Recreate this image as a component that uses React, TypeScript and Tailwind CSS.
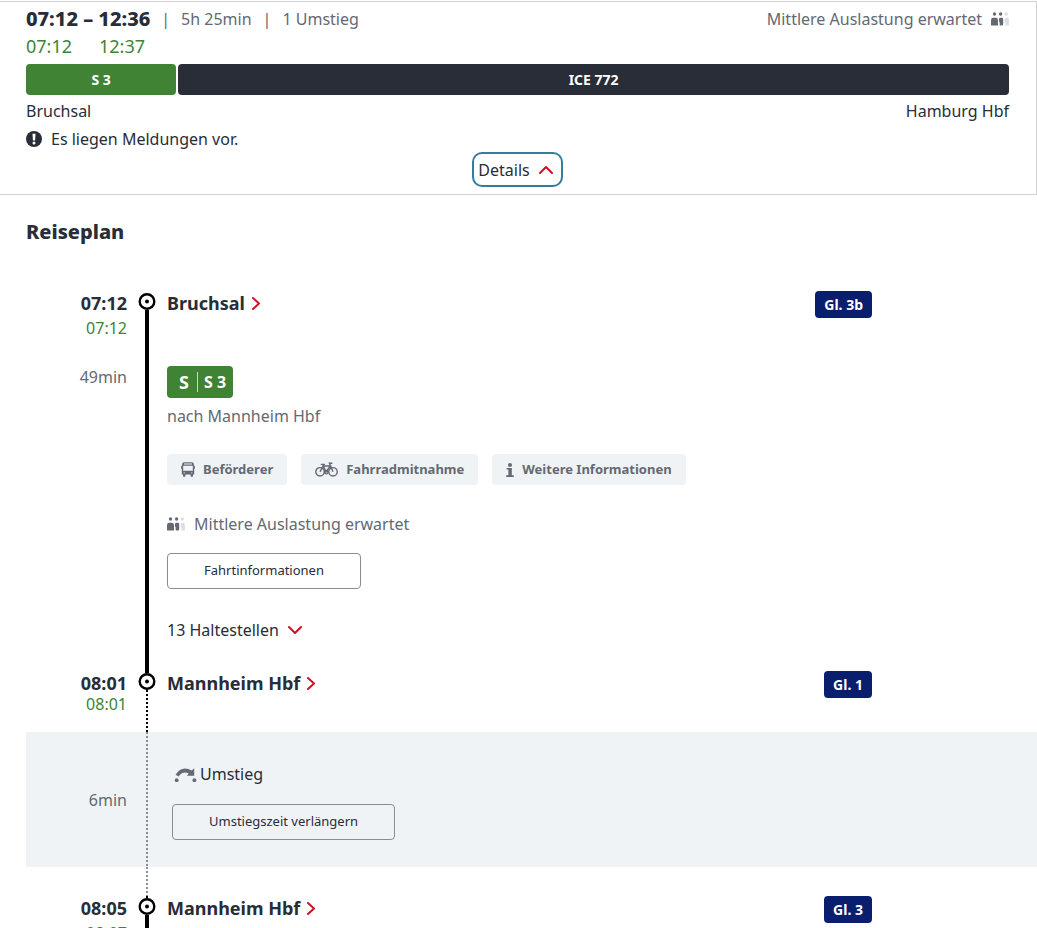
import clsx from 'clsx';
import type { ReactNode } from 'react';

type Segment = { name: string; minutes: number; className: string };

const SEGMENTS: ReadonlyArray<Segment> = [
    { name: 'S 3', minutes: 49, className: 'bg-[#408335]' },
    { name: 'ICE 772', minutes: 271, className: 'bg-[#282d37]' },
];

function OccupancyIcon() {
    return (
        <svg viewBox="0 0 18 14" className="h-[14px] w-[18px] shrink-0" aria-hidden>
            <g fill="#646973">
                <circle cx="3.5" cy="2" r="1.7" />
                <circle cx="9.6" cy="2" r="1.7" />
                <path d="M0 8.2Q0 5.8 2.2 5.8H4.8Q7 5.8 7 8.2V13.5H0Z" />
                <path d="M8 7.2Q8 5.8 9.4 5.8H10.6Q12.2 5.8 12.2 7.2V12Q12.2 13.5 10.8 13.5H9.4Q8.6 13.5 8.6 12.4V10.2Q8 9.8 8 9Z" />
            </g>
            <g fill="#dcdee2">
                <circle cx="15.3" cy="2" r="1.7" />
                <path d="M13.8 7.4Q13.8 5.8 15.2 5.8H16.4Q17.9 5.8 17.9 7.4V13.5H14.4V10.2Q13.8 9.8 13.8 9Z" />
            </g>
        </svg>
    );
}

function BusIcon() {
    return (
        <svg viewBox="0 0 14 15" className="h-[15px] w-[14px] shrink-0" aria-hidden>
            <path
                fill="#646973"
                fillRule="evenodd"
                d="M3 .3H11Q12.8.3 12.9 2.2L13 3.8H13.8V7H13.2V12.5H12V14Q12 14.7 11.2 14.7H10.4Q9.6 14.7 9.6 14V12.5H4.4V14Q4.4 14.7 3.6 14.7H2.8Q2 14.7 2 14V12.5H.8V7H.2V3.8H1L1.1 2.2Q1.2.3 3 .3ZM3 1.6V2.4H11V1.6ZM2.2 3.8V8.8H11.8V3.8ZM2.6 10.5V11.3H4V10.5ZM10 10.5V11.3H11.4V10.5Z"
            />
        </svg>
    );
}

function BikeIcon() {
    return (
        <svg viewBox="0 0 23 15" className="h-[15px] w-[23px] shrink-0" fill="none" stroke="#646973" strokeWidth="1.4" aria-hidden>
            <circle cx="5" cy="9.8" r="4.2" />
            <circle cx="18" cy="9.8" r="4.2" />
            <path d="M5 9.8L8.2 4H15.4L11 10L7.8 2.6M18 9.8L14.4 1.2H17.4M5.8 2.4H10" />
            <circle cx="11.3" cy="10.2" r="1.7" />
        </svg>
    );
}

function InfoIcon() {
    return (
        <svg viewBox="0 0 8 14" className="h-[14px] w-2 shrink-0" fill="#646973" aria-hidden>
            <circle cx="4" cy="2" r="2" />
            <path d="M.6 5H5.8V12.2H7.8V13.9H.2V12.2H2.4V6.6H.6Z" />
        </svg>
    );
}

function TransferIcon() {
    return (
        <svg viewBox="0 0 24 15" className="h-[15px] w-6 shrink-0" aria-hidden>
            <g fill="#646973">
                <circle cx="2.7" cy="13.2" r="1.9" />
                <circle cx="20.4" cy="13.2" r="1.9" />
                <path d="M20.2 1.2V8.8H12.8L14.8 6.6Q8.6 3.6 4.6 9.6L1.6 7.8Q7.6 -2 17.8 3.4Z" />
            </g>
        </svg>
    );
}

function AlertIcon() {
    return (
        <svg viewBox="0 0 16 16" className="size-4 shrink-0" aria-hidden>
            <circle cx="8" cy="8" r="8" fill="#282d37" />
            <path d="M6.5 2.8H9.5L9.1 9.4H6.9Z" fill="#fff" />
            <circle cx="8" cy="12" r="1.5" fill="#fff" />
        </svg>
    );
}

function Chevron({ direction }: { direction: 'up' | 'down' | 'right' }) {
    return (
        <svg
            viewBox="0 0 14 14"
            className="size-[14px] shrink-0"
            fill="none"
            stroke="#d01027"
            strokeWidth="2"
            strokeLinecap="round"
            strokeLinejoin="round"
            aria-hidden
        >
            <path d={{ up: 'M1 10L7 4L13 10', down: 'M1 4L7 10L13 4', right: 'M5 1L11 6.5L5 12' }[direction]} />
        </svg>
    );
}

type LineStyle = 'none' | 'solid' | 'dotted' | 'muted';

function Line({ line, className }: { line: LineStyle; className?: string }) {
    return (
        <span
            className={clsx(
                className,
                line === 'solid' && 'w-1 bg-black',
                line === 'dotted' && 'w-[2px] bg-[repeating-linear-gradient(to_bottom,#000_0_2px,transparent_2px_4px)]',
                line === 'muted' && 'w-[2px] bg-[repeating-linear-gradient(to_bottom,#878c96_0_2px,transparent_2px_4px)]',
            )}
        />
    );
}

function StopMarker({ above, below }: { above: LineStyle; below: LineStyle }) {
    return (
        <div className="flex flex-col items-center">
            <Line line={above} className="h-[2px]" />
            <svg viewBox="0 0 18 17" className="h-[17px] w-[18px] shrink-0" aria-hidden>
                <circle cx="9" cy="8.5" r="7.3" fill="#fff" stroke="#000" strokeWidth="2.4" />
                <circle cx="9" cy="8.5" r="2" />
            </svg>
            <Line line={below} className="flex-1" />
        </div>
    );
}

type StopProps = {
    time: string;
    liveTime: string;
    name: string;
    track: string;
    above: LineStyle;
    below: LineStyle;
    duration?: string;
    tight?: boolean;
    className?: string;
    children?: ReactNode;
};

function Stop({ time, liveTime, name, track, above, below, duration, tight, className, children }: StopProps) {
    return (
        <li className={clsx('grid max-w-[846px] grid-cols-[101px_40px_1fr]', className)}>
            <div className="text-right">
                <p className={clsx('text-lg leading-[25px] font-bold', !tight && 'pb-[2px]')}>{time}</p>
                <p className={clsx('text-[#408335]', tight ? 'leading-4' : 'leading-[21px]')}>{liveTime}</p>
                {duration && <p className="mt-7 leading-[21px] text-[#646973]">{duration}</p>}
            </div>
            <StopMarker above={above} below={below} />
            <div>
                <div className="flex h-[27px] items-start justify-between">
                    <a href="#" className="flex items-center gap-[3px] text-lg leading-[25px] font-bold">
                        {name}
                        <Chevron direction="right" />
                    </a>
                    <span className="rounded bg-[#0a1e6e] px-[9px] text-sm leading-[27px] font-bold text-white">{track}</span>
                </div>
                {children}
            </div>
        </li>
    );
}

function InfoChip({ icon, children }: { icon: ReactNode; children: ReactNode }) {
    return (
        <button type="button" className="flex h-[31px] items-center gap-2 rounded bg-[#f0f3f5] px-[14px] text-[13px] font-bold text-[#646973]">
            {icon}
            {children}
        </button>
    );
}

function OutlineButton({ className, children }: { className?: string; children: ReactNode }) {
    return (
        <button type="button" className={clsx('block h-9 rounded border border-[#878c96] px-9 text-[13px]', className)}>
            {children}
        </button>
    );
}

export default function App() {
    return (
        <main className="h-screen overflow-hidden bg-white pt-px font-['Noto_Sans',sans-serif] text-base text-[#282d37]">
            <section className="border border-l-0 border-[#d0d2d5] pt-1 pr-[27px] pb-[7px] pl-[26px]">
                <div className="flex h-[26px] items-center justify-between text-[#646973]">
                    <div className="flex items-center gap-[11px]">
                        <h1 className="text-xl font-extrabold text-[#282d37]">07:12 – 12:36</h1>
                        <span>|</span>
                        <span>5h 25min</span>
                        <span>|</span>
                        <span>1 Umstieg</span>
                    </div>
                    <div className="flex items-center gap-[9px]">
                        Mittlere Auslastung erwartet
                        <OccupancyIcon />
                    </div>
                </div>
                <div className="flex h-7 items-center gap-[27px] text-lg text-[#408335]">
                    <span>07:12</span>
                    <span>12:37</span>
                </div>
                <div className="mt-1 flex gap-[2px]">
                    {SEGMENTS.map((segment) => (
                        <div
                            key={segment.name}
                            className={clsx('basis-0 rounded text-center text-sm leading-[31px] font-bold text-white', segment.className)}
                            style={{ flexGrow: segment.minutes }}
                        >
                            {segment.name}
                        </div>
                    ))}
                </div>
                <div className="mt-1 flex justify-between">
                    <span>Bruchsal</span>
                    <span>Hamburg Hbf</span>
                </div>
                <div className="mt-1 flex items-center gap-[9px]">
                    <AlertIcon />
                    Es liegen Meldungen vor.
                </div>
                <button
                    type="button"
                    aria-expanded
                    className="mx-auto mt-px flex h-[35px] items-center gap-[9px] rounded-[10px] border-2 border-[#347d9c] pr-2 pl-1"
                >
                    Details
                    <Chevron direction="up" />
                </button>
            </section>

            <section className="pt-6 pl-[26px]">
                <h2 className="text-xl leading-[26px] font-extrabold">Reiseplan</h2>

                <ol className="mt-[46px]">
                    <Stop time="07:12" liveTime="07:12" name="Bruchsal" track="Gl. 3b" above="none" below="solid" duration="49min">
                        <div className="mt-12 flex h-8 w-fit items-center rounded bg-[#408335] pr-[7px] pl-3 font-bold text-white">
                            <span className="pr-2 text-lg leading-5">S</span>
                            <span className="border-l border-white/70 pl-[6px] leading-5">S 3</span>
                        </div>
                        <p className="mt-[6px] text-[#646973]">nach Mannheim Hbf</p>
                        <div className="mt-[26px] flex flex-wrap gap-[14px]">
                            <InfoChip icon={<BusIcon />}>Beförderer</InfoChip>
                            <InfoChip icon={<BikeIcon />}>Fahrradmitnahme</InfoChip>
                            <InfoChip icon={<InfoIcon />}>Weitere Informationen</InfoChip>
                        </div>
                        <p className="mt-[27px] flex items-center gap-[9px] text-[#646973]">
                            <OccupancyIcon />
                            Mittlere Auslastung erwartet
                        </p>
                        <OutlineButton className="mt-[17px]">Fahrtinformationen</OutlineButton>
                        <button type="button" aria-expanded={false} className="mt-[29px] mb-[29px] flex h-6 items-center gap-[9px]">
                            13 Haltestellen
                            <Chevron direction="down" />
                        </button>
                    </Stop>
                    <Stop time="08:01" liveTime="08:01" name="Mannheim Hbf" track="Gl. 1" above="solid" below="dotted" tight className="h-[61px]" />
                    <li>
                        <div className="grid grid-cols-[101px_40px_1fr] items-center bg-[#eff3f5]">
                            <p className="text-right text-[#646973]">6min</p>
                            <div className="flex justify-center self-stretch">
                                <Line line="muted" />
                            </div>
                            <div className="pt-[30px] pb-[27px] pl-[5px]">
                                <p className="flex items-center gap-[2px] pl-[2px]">
                                    <TransferIcon />
                                    Umstieg
                                </p>
                                <OutlineButton className="mt-[18px]">Umstiegszeit verlängern</OutlineButton>
                            </div>
                        </div>
                        <div className="grid h-[29px] grid-cols-[101px_40px_1fr]">
                            <span />
                            <div className="flex justify-center">
                                <Line line="muted" />
                            </div>
                        </div>
                    </li>
                    <Stop time="08:05" liveTime="08:07" name="Mannheim Hbf" track="Gl. 3" above="dotted" below="solid" />
                </ol>
            </section>
        </main>
    );
}
